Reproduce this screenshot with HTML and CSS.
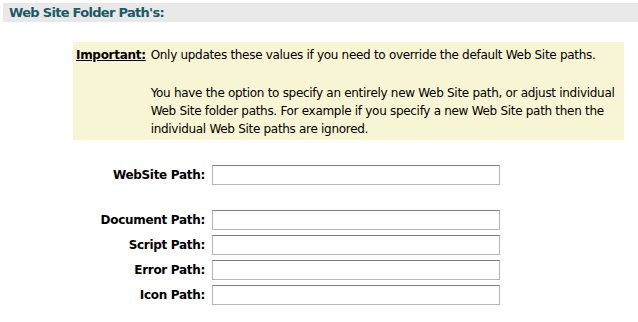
FILE: index.html
```html
<!DOCTYPE html>
<html lang="en">

<head>
    <meta charset="UTF-8">
    <title>Web Site Folder Paths</title>
    <link rel="stylesheet" href="styles.css">
</head>

<body>

    <div class="section-title">Web Site Folder Path's:</div>

    <div class="notice">
        <div class="notice-label">Important:</div>
        <div class="notice-text">
            <p>Only updates these values if you need to override the default Web Site paths.</p>
            <p>You have the option to specify an entirely new Web Site path, or adjust individual
                Web Site folder paths. For example if you specify a new Web Site path then the
                individual Web Site paths are ignored.</p>
        </div>
    </div>

    <div class="paths">
        <label for="website-path">WebSite Path:</label>
        <input type="text" id="website-path">

        <div class="spacer"></div>

        <label for="document-path">Document Path:</label>
        <input type="text" id="document-path">

        <label for="script-path">Script Path:</label>
        <input type="text" id="script-path">

        <label for="error-path">Error Path:</label>
        <input type="text" id="error-path">

        <label for="icon-path">Icon Path:</label>
        <input type="text" id="icon-path">
    </div>

</body>

</html>
```

FILE: styles.css
```css
body {
    font-family: "DejaVu Sans", Verdana, sans-serif;
    font-size: 12px;
    color: #000;
    margin: 0;
    padding: 3px 0 0 3px;
    background-color: #fff;
}

.section-title {
    background-color: #e8e8e8;
    color: #1d5866;
    font-size: 13px;
    font-weight: bold;
    letter-spacing: -0.7px;
    height: 19px;
    line-height: 19px;
    padding-left: 6px;
}

.notice {
    display: flex;
    background-color: #f8f5d4;
    margin: 20px 14px 0 70px;
    padding: 4px 0 2px 3px;
    line-height: 18px;
}

.notice-label {
    font-weight: bold;
    text-decoration: underline;
    letter-spacing: -0.3px;
    padding-right: 5px;
    white-space: nowrap;
}

.notice-text {
    letter-spacing: -0.3px;
}

.notice-text p {
    margin: 0 0 20px 0;
}

.notice-text p:last-child {
    margin-bottom: 0;
}

.paths {
    display: grid;
    grid-template-columns: 132px 288px;
    column-gap: 7px;
    row-gap: 5px;
    margin: 25px 0 0 70px;
    align-items: center;
}

.paths label {
    font-size: 12px;
    font-weight: bold;
    letter-spacing: -0.3px;
    text-align: right;
}

.paths input {
    box-sizing: border-box;
    width: 288px;
    height: 20px;
    margin: 0;
    padding: 2px;
    border: 1px solid #b5b5b5;
    border-top-color: #7d7d7d;
    background-color: #fff;
}

.paths .spacer {
    grid-column: 1 / 3;
    height: 15px;
}
```
